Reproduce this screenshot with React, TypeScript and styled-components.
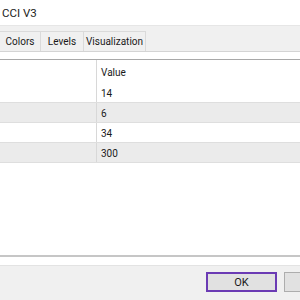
import styled, { createGlobalStyle } from "styled-components";

const GlobalStyle = createGlobalStyle`
  html, body {
    margin: 0;
    padding: 0;
  }
  body {
    width: 300px;
    height: 300px;
    overflow: hidden;
    font-family: Roboto, "Liberation Sans", sans-serif;
    color: #1a1a1a;
  }
`;

const rows = [
  { value: "14" },
  { value: "6" },
  { value: "34" },
  { value: "300" },
];

const App = () => {
  return (
    <Window>
      <GlobalStyle />
      <TitleBar>CCI V3</TitleBar>
      <TabStrip>
        <Tab $width={41} $first>
          Colors
        </Tab>
        <Tab $width={43}>Levels</Tab>
        <Tab $width={63} $last>
          Visualization
        </Tab>
      </TabStrip>
      <Panel>
        <List>
          <HeaderRow>
            <Cell />
            <Cell>Value</Cell>
          </HeaderRow>
          {rows.map((r, i) => (
            <Row key={i} $shaded={i % 2 === 1}>
              <Cell />
              <Cell>{r.value}</Cell>
            </Row>
          ))}
        </List>
      </Panel>
      <Footer>
        <Button $primary>OK</Button>
        {/* cancel button, its label lies past the right edge */}
        <Button aria-label="Cancel" />
      </Footer>
    </Window>
  );
};

const Window = styled.div`
  width: 300px;
  height: 300px;
  display: flex;
  flex-direction: column;
  background: #f0f0f0;
  overflow: hidden;
`;

const TitleBar = styled.div`
  height: 25px;
  flex-shrink: 0;
  background: #fff;
  display: flex;
  align-items: center;
  padding-left: 2px;
  padding-top: 1px;
  box-sizing: border-box;
  font-size: 11.5px;
  color: #222;
`;

const TabStrip = styled.div`
  height: 26px;
  flex-shrink: 0;
  display: flex;
  align-items: flex-end;
  background: #f0f0f0;
  border-top: 1px solid #e6e6e6;
  box-sizing: border-box;
`;

const Tab = styled.div<{ $width: number; $first?: boolean; $last?: boolean }>`
  width: ${(p) => p.$width}px;
  height: 20px;
  box-sizing: border-box;
  flex-shrink: 0;
  margin-left: ${(p) => (p.$first ? "-1px" : "0")};
  border-top: 1px solid #dadada;
  border-left: 1px solid #dadada;
  border-right: ${(p) => (p.$last ? "1px solid #dadada" : "none")};
  display: flex;
  align-items: center;
  justify-content: center;
  font-size: 10px;
  color: #1a1a1a;
`;

const Panel = styled.div`
  flex: 1;
  background: #fff;
  border-top: 1px solid #d4d4d4;
  padding: 7px 0 8px;
  display: flex;
  flex-direction: column;
  min-height: 0;
`;

const List = styled.div`
  flex: 1;
  border-top: 1px solid #a8a8a8;
  border-bottom: 2px solid #c6c6c6;
  background: #fff;
`;

const HeaderRow = styled.div`
  display: grid;
  grid-template-columns: 97px 1fr;
  height: 23px;
  padding-top: 2px;
  box-sizing: border-box;
  align-items: stretch;
  font-size: 10px;
`;

const Row = styled.div<{ $shaded: boolean }>`
  display: grid;
  grid-template-columns: 97px 1fr;
  height: 20px;
  padding-top: 2px;
  box-sizing: border-box;
  border-bottom: 1px solid #dedede;
  background: ${(p) => (p.$shaded ? "#ebebeb" : "#fff")};
  font-size: 10px;
`;

const Cell = styled.div`
  display: flex;
  align-items: center;
  padding-left: 4px;
  &:first-child {
    border-right: 1px solid #d8d8d8;
    margin-top: -2px;
  }
`;

const Footer = styled.div`
  height: 35px;
  flex-shrink: 0;
  box-sizing: border-box;
  border-top: 1px solid #e3e3e3;
  background: #f0f0f0;
  display: flex;
  align-items: flex-start;
  gap: 7px;
  padding: 6px 0 0 206px;
`;

const Button = styled.div<{ $primary?: boolean }>`
  width: 71px;
  height: 20px;
  flex-shrink: 0;
  box-sizing: border-box;
  background: #e1e1e1;
  border: ${(p) => (p.$primary ? "2px solid #6b3bb4" : "1px solid #adadad")};
  display: flex;
  align-items: center;
  justify-content: center;
  font-size: 11px;
  color: #1a1a1a;
`;

export default App;
